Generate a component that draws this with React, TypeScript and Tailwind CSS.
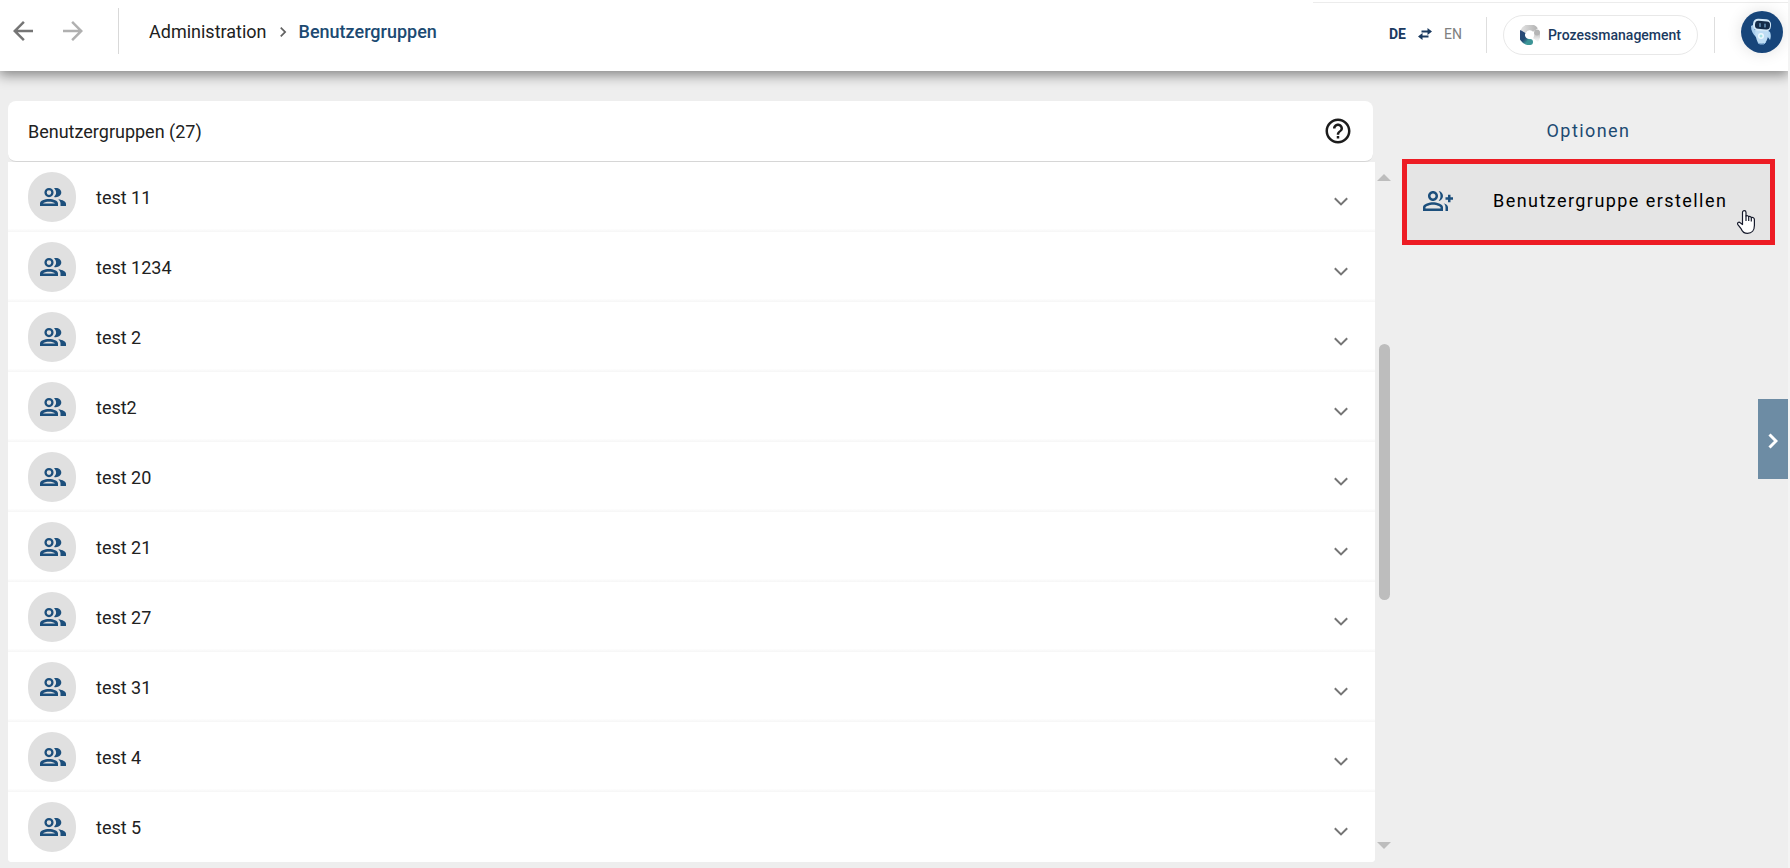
import React, { useState } from "react";
import { MdArrowBack, MdArrowForward, MdChevronRight, MdHelpOutline, MdOutlineGroupAdd } from "react-icons/md";

type UserGroup = {
  id: number;
  name: string;
};

const groups: UserGroup[] = [
  { id: 1, name: "test 11" },
  { id: 2, name: "test 1234" },
  { id: 3, name: "test 2" },
  { id: 4, name: "test2" },
  { id: 5, name: "test 20" },
  { id: 6, name: "test 21" },
  { id: 7, name: "test 27" },
  { id: 8, name: "test 31" },
  { id: 9, name: "test 4" },
  { id: 10, name: "test 5" },
];

const PeopleIcon = () => (
  <svg width="26" height="18" viewBox="0 0 26 18" fill="currentColor" fillRule="evenodd" aria-hidden="true">
    <path d="M9 0a4.600 4.600 0 1 0 0 9.200a4.600 4.600 0 0 0 0-9.200zM9 2.300a2.300 2.300 0 1 1 0 4.600a2.300 2.300 0 0 1 0-4.600z" />
    <path d="M14 0.300c4-1 7.300 1.200 7.300 4.300s-3.300 5.300-7.300 4.300c2.800-2.500 2.800-6.100 0-8.600z" />
    <path d="M0 18v-2.500c0-6 18-6 18 0V18zM3 15.400h12c-1.500-2.100-10.500-2.100-12 0z" />
    <path d="M18.300 11.200c4.500.6 7.700 2.200 7.700 4.800v2h-5.500v-2.500c0-1.700-.8-3.200-2.200-4.300z" />
  </svg>
);

const ExpandIcon = () => (
  <svg width="14" height="9" viewBox="0 0 14 9" fill="none" stroke="#757575" strokeWidth="2" aria-hidden="true">
    <path d="M.8 1.200L7 7.400L13.200 1.200" />
  </svg>
);

const SwapIcon = () => (
  <svg width="14" height="12" viewBox="0 0 14 12" fill="none" stroke="#1b3a5f" strokeWidth="2" aria-hidden="true">
    <path d="M3.500 3.500H11" />
    <path d="M3 8.500H10.500" />
    <path d="M9.500 0l4.500 3.500L9.500 7zM4.500 5L0 8.500L4.500 12z" fill="#1b3a5f" stroke="none" />
  </svg>
);

const ProcessLogo = () => (
  <svg width="20" height="20" viewBox="0 0 20 20" fill="none" strokeWidth="6" aria-hidden="true">
    <defs>
      <linearGradient id="logo-blue" x1="0" y1="0" x2="0.7" y2="1">
        <stop offset="0" stopColor="#2c4a78" />
        <stop offset="0.6" stopColor="#234b74" />
        <stop offset="1" stopColor="#3f9a9b" />
      </linearGradient>
      <linearGradient id="logo-grey" x1="0" y1="0" x2="1" y2="0">
        <stop offset="0" stopColor="#dcdcdc" />
        <stop offset="1" stopColor="#b8b8b8" />
      </linearGradient>
      <linearGradient id="logo-fade" x1="0" y1="0" x2="0" y2="1">
        <stop offset="0" stopColor="#b5b5b5" />
        <stop offset="1" stopColor="#f2f2f2" />
      </linearGradient>
    </defs>
    <path d="M3.200 6.500A7.200 7.200 0 0 1 15.500 5" stroke="url(#logo-grey)" />
    <path d="M17 7C18 10.500 17 13 15.500 15" stroke="url(#logo-fade)" />
    <circle cx="17" cy="7.500" r="2.900" fill="#b5b5b5" />
    <path d="M3 6.500A7 7 0 0 0 10 17" stroke="url(#logo-blue)" />
    <circle cx="10" cy="17" r="3" fill="#3c9496" />
  </svg>
);

const RobotAvatar = () => (
  <svg width="42" height="42" viewBox="0 0 42 42" aria-hidden="true">
    <circle cx="21" cy="21" r="21" fill="#17457a" />
    <path d="M12 14l-2 1c0 5 2 8 5 11l1-3c-2-3-3-6-4-9z" fill="#a8cdee" />
    <path d="M26 19l3 2c1 3 1 5 0 8l-3-4z" fill="#b5d8f4" />
    <path d="M14 19l13 0c1 6-1 11-3 13c-2 1-5 1-7 0c-2-4-3-9-3-13z" fill="#bddcf4" />
    <rect x="12" y="8" width="18" height="12" rx="5" fill="#d3e8f8" transform="rotate(5 21 14)" />
    <rect x="14" y="10" width="15" height="8" rx="3.500" fill="#142b49" transform="rotate(5 21 14)" />
    <path d="M19 12.500v3M24 13v3" stroke="#7fb0d6" strokeWidth="1.200" strokeLinecap="round" />
    <circle cx="20" cy="25" r="3" fill="#eef8ff" />
    <circle cx="20" cy="25" r="1.500" fill="#a5e2e4" />
    <path d="M17 32l2 1h4l2-2" stroke="#8cb8de" fill="none" />
  </svg>
);

const HandCursor = () => (
  <svg width="18" height="24" viewBox="0 0 18 24" aria-hidden="true">
    <path
      d="M5.500 14.500V2.500c0-2.500 3.500-2.500 3.500 0V6c1-.7 2.300-.3 2.600.7c1-.6 2.300-.2 2.600.9c1.500-.6 3.200.2 3.200 1.900v6c0 4.500-2.500 7.900-6.900 7.900c-3.200 0-5.200-1.800-6.300-4.500L.7 14.300c-.6-1.700 1.200-2.900 2.500-1.500z"
      fill="#fff"
      stroke="#171b2c"
      strokeWidth="1.200"
      strokeLinejoin="round"
    />
    <path d="M9 5.500v5.500M11.700 6.500v4.500M14.300 7.500V11.500" stroke="#171b2c" strokeWidth="1.200" fill="none" />
  </svg>
);

const TopBar = () => (
  <header className="relative z-10 flex h-[71px] items-start justify-between bg-white shadow-[0_3px_12px_1px_rgba(0,0,0,0.45)] [clip-path:inset(0_0_-30px_0)]">
    <div className="flex items-center pt-2 pl-2">
      <button type="button" aria-label="Zurück" className="text-[#757575]">
        <MdArrowBack size={30} />
      </button>
      <button type="button" aria-label="Vorwärts" className="ml-5 text-[#b0b0b0]">
        <MdArrowForward size={30} />
      </button>
      <div className="ml-[30px] h-[46px] w-px bg-[#d9d9d9]" />
      <nav aria-label="Breadcrumb" className="flex items-center pt-px pl-[30px] text-lg leading-6">
        <a href="#administration" className="text-[#212121]">
          Administration
        </a>
        <MdChevronRight size={20} className="mx-[6px] text-[#616161]" />
        <a href="#benutzergruppen" aria-current="page" className="font-medium text-[#1c4a72]">
          Benutzergruppen
        </a>
      </nav>
    </div>

    <div className="mt-[2px] flex items-center border-t border-[#ececec] pt-[6px] pr-[5px] pl-[76px]">
      <div className="flex items-center pt-1 text-sm">
        <button type="button" className="font-bold text-[#1b3a5f]">
          DE
        </button>
        <span className="mx-3">
          <SwapIcon />
        </span>
        <button type="button" className="text-[#808080]">
          EN
        </button>
      </div>
      <div className="mt-[6px] ml-6 h-9 w-px bg-[#dedede]" />
      <button
        type="button"
        className="mt-[6px] ml-4 flex h-10 items-center gap-2 rounded-full border border-[#e8e8e8] px-4 text-sm font-medium text-[#1b3a5f]"
      >
        <ProcessLogo />
        Prozessmanagement
      </button>
      <div className="mt-[6px] ml-4 h-9 w-px bg-[#dedede]" />
      <button type="button" aria-label="Assistent" className="ml-[26px] rounded-full shadow-[0_0_16px_rgba(0,0,0,0.12)]">
        <RobotAvatar />
      </button>
    </div>
  </header>
);

interface GroupRowProps {
  group: UserGroup;
  isOpen: boolean;
  onToggle: () => void;
}

const GroupRow = ({ group, isOpen, onToggle }: GroupRowProps) => (
  <li className="bg-linear-to-t from-[#f6f6f6] to-white to-5% last:from-white">
    <button type="button" aria-expanded={isOpen} onClick={onToggle} className="flex h-[70px] w-full items-center pr-[27px] pl-5 text-left">
      <span className="flex h-[50px] w-12 items-center justify-center rounded-full bg-[#e0e0e0] pl-[2px] text-[#1c4f7c]">
        <PeopleIcon />
      </span>
      <span className="flex-1 pt-px pl-5 text-lg leading-6 text-[#212121]">{group.name}</span>
      <span className="pt-2">
        <ExpandIcon />
      </span>
    </button>
  </li>
);

const ScrollTrack = () => (
  <div aria-hidden="true" className="flex w-[18px] flex-col items-center pt-3 pb-[13px]">
    <svg width="14" height="7" viewBox="0 0 14 7">
      <path d="M7 0l7 7H0z" fill="#bdbdbd" />
    </svg>
    <div className="flex flex-1 flex-col items-center">
      <div className="flex-[163]" />
      <div className="w-[11px] flex-[256] rounded-full bg-[#bdbdbd]" />
      <div className="flex-[242]" />
    </div>
    <svg width="14" height="7" viewBox="0 0 14 7">
      <path d="M0 0h14L7 7z" fill="#bdbdbd" />
    </svg>
  </div>
);

const App = () => {
  const [openId, setOpenId] = useState<number | null>(null);

  return (
    <div className="min-h-screen bg-[#f4f4f4] pr-[2px] font-[Roboto,sans-serif]">
      <div className="relative min-h-screen bg-[#eeeeee]">
        <TopBar />

        <main className="flex items-start pt-[30px] pb-[6px] pl-2">
          <section className="min-w-0 flex-1">
            <div className="mr-5 flex h-[61px] items-center justify-between rounded-lg border-b border-[#d6d6d6] bg-white px-5">
              <h1 className="pt-px text-lg leading-6 text-[#212121]">Benutzergruppen (27)</h1>
              <button type="button" aria-label="Hilfe" className="text-[#1c1c1c]">
                <MdHelpOutline size={30} />
              </button>
            </div>
            <div className="flex">
              <ul className="flex-1 overflow-hidden rounded-b-sm bg-white">
                {groups.map((group) => (
                  <GroupRow
                    key={group.id}
                    group={group}
                    isOpen={openId === group.id}
                    onToggle={() => setOpenId(openId === group.id ? null : group.id)}
                  />
                ))}
              </ul>
              <ScrollTrack />
            </div>
          </section>

          <aside className="w-[395px] pr-[13px] pl-[9px]">
            <h2 className="pt-[18px] pb-4 text-center text-lg leading-6 tracking-[0.08em] text-[#1c4a72]">Optionen</h2>
            <button
              type="button"
              className="relative flex h-[86px] w-full items-center border-5 border-[#ed1c24] bg-[#e5e5e5] pb-[2px] pl-4 text-lg leading-6 text-black"
            >
              <MdOutlineGroupAdd size={30} className="text-[#1c4f7c]" />
              <span className="pl-10 tracking-[0.08em]">Benutzergruppe erstellen</span>
              <span className="absolute right-[15px] bottom-[6px]">
                <HandCursor />
              </span>
            </button>
          </aside>
        </main>

        <button
          type="button"
          aria-label="Leiste ausklappen"
          className="absolute top-[399px] right-0 flex h-20 w-[30px] items-center justify-center bg-[#6d8ca4] pt-1"
        >
          <svg width="10" height="16" viewBox="0 0 10 16" fill="none" stroke="#fff" strokeWidth="3">
            <path d="M1.500 1.500L8 8L1.500 14.500" />
          </svg>
        </button>
      </div>
    </div>
  );
};

export default App;
